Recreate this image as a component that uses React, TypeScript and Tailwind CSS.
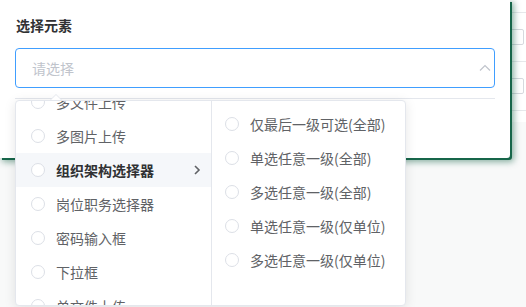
import React from "react";

const leftItems = [
  "多文件上传",
  "多图片上传",
  "组织架构选择器",
  "岗位职务选择器",
  "密码输入框",
  "下拉框",
  "单文件上传",
];

const rightItems = [
  "仅最后一级可选(全部)",
  "单选任意一级(全部)",
  "多选任意一级(全部)",
  "单选任意一级(仅单位)",
  "多选任意一级(仅单位)",
];

function Radio() {
  return (
    <span className="w-[14px] h-[14px] shrink-0 rounded-full border border-[#dcdfe6] bg-white" />
  );
}

export default function App() {
  return (
    <div
      className="relative w-[526px] h-[307px] overflow-hidden bg-[#f8f9f9]"
      style={{ fontFamily: '"Noto Sans CJK SC", "Noto Sans", sans-serif' }}
    >
      {/* background page */}
      <div className="bg-white h-[122px] pt-[12px]">
        <div className="border-t border-[#e6e8eb]">
          <div className="h-[49px] border-b border-[#e6e8eb] flex items-center justify-end pr-[2px]">
            <div className="w-[60px] h-[16px] border border-[#d6d9de] rounded-[2px]" />
          </div>
          <div className="h-[49px] border-b border-[#e6e8eb] flex items-center justify-end pr-[2px]">
            <div className="w-[60px] h-[16px] border border-[#d6d9de] rounded-[2px]" />
          </div>
        </div>
      </div>

      {/* panel */}
      <div className="absolute left-0 top-0 w-[510px] h-[158px] bg-white rounded-br-[3px] shadow-[2px_2px_0_0_#17664a,3px_3px_6px_1px_rgba(23,102,74,0.5)] pl-[15px] pr-[16px] pt-[15px]">
        <div className="text-[14px] leading-5 font-bold text-[#303133] pl-[1px]">选择元素</div>
        <div className="mt-[13px] h-[40px] w-[480px] border border-[#409eff] rounded-[4px] flex items-center justify-between pl-[16px] pr-[3px]">
          <span className="text-[14px] text-[#c0c4cc]">请选择</span>
          <svg width="12" height="8" viewBox="0 0 12 8" fill="none">
            <path d="M1 6.5 L6 1.5 L11 6.5" stroke="#c0c4cc" strokeWidth="1.2" />
          </svg>
        </div>
        <div className="mt-[10px] w-[480px] h-px bg-[#e4e7ed]" />
      </div>

      {/* dropdown */}
      <div className="absolute left-[15px] top-[100px] w-[391px] h-[206px]">
        {/* arrow */}
        <div className="absolute left-[35px] -top-[6px] w-0 h-0 border-x-[6px] border-x-transparent border-b-[6px] border-b-[#e4e7ed]" />
        <div className="absolute left-[36px] -top-[5px] w-0 h-0 border-x-[5px] border-x-transparent border-b-[5px] border-b-white" />
        <div className="w-full h-full bg-white border border-[#e4e7ed] rounded-[4px] shadow-[0_2px_12px_0_rgba(0,0,0,0.1)] flex overflow-hidden">
          <div className="w-[196px] h-full border-r border-[#e4e7ed] overflow-hidden">
            <div className="-mt-[16px]">
              {leftItems.map((t) => {
                const active = t === "组织架构选择器";
                return (
                  <div
                    key={t}
                    className={
                      "h-[34px] flex items-center pl-[15px] pr-[10px] gap-[11px] text-[14px] " +
                      (active ? "bg-[#f5f7fa] text-[#303133] font-bold" : "text-[#606266]")
                    }
                  >
                    <Radio />
                    <span className="flex-1 whitespace-nowrap">{t}</span>
                    {active && (
                      <svg width="8" height="10" viewBox="0 0 8 10" fill="none">
                        <path d="M2 1 L6 5 L2 9" stroke="#606266" strokeWidth="1.6" />
                      </svg>
                    )}
                  </div>
                );
              })}
            </div>
          </div>
          <div className="flex-1 pt-[6px]">
            {rightItems.map((t) => (
              <div
                key={t}
                className="h-[34px] flex items-center pl-[13px] gap-[11px] text-[14px] text-[#606266]"
              >
                <Radio />
                <span className="whitespace-nowrap">{t}</span>
              </div>
            ))}
          </div>
        </div>
      </div>
    </div>
  );
}
